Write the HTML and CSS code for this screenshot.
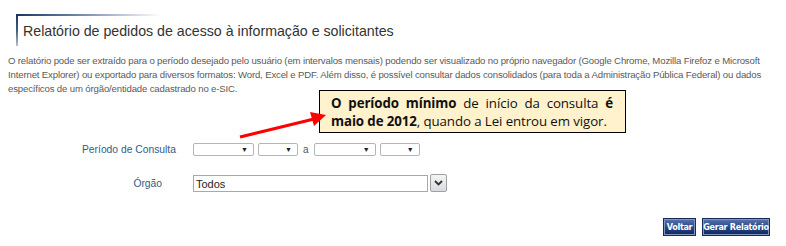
FILE: index.html
```html
<!DOCTYPE html>
<html lang="pt-BR">
<head>
<meta charset="utf-8">
<link rel="stylesheet" href="styles.css">
</head>
<body>
<div class="page">
  <div class="header"><h1 class="title">Relatório de pedidos de acesso à informação e solicitantes</h1></div>
  <p class="intro">O relatório pode ser extraído para o período desejado pelo usuário (em intervalos mensais) podendo ser visualizado no próprio navegador (Google Chrome, Mozilla Firefoz e Microsoft Internet Explorer) ou exportado para diversos formatos: Word, Excel e PDF. Além disso, é possível consultar dados consolidados (para toda a Administração Pública Federal) ou dados específicos de um órgão/entidade cadastrado no e-SIC.</p>
  <div class="form">
    <div class="row row-periodo">
      <span class="label">Período de Consulta</span>
      <div class="controls">
        <span class="sel sel-w1"><span class="tri">▼</span></span>
        <span class="sel sel-w2"><span class="tri">▼</span></span>
        <span class="sep">a</span>
        <span class="sel sel-w3"><span class="tri">▼</span></span>
        <span class="sel sel-w2"><span class="tri">▼</span></span>
      </div>
    </div>
    <div class="row row-orgao">
      <span class="label">Órgão</span>
      <div class="controls">
        <span class="combo">Todos</span>
        <span class="combo-btn"><svg width="9" height="6" viewBox="0 0 9 6"><path d="M1 1 L4.5 4.5 L8 1" fill="none" stroke="#333" stroke-width="1.8"/></svg></span>
      </div>
    </div>
  </div>
  <div class="actions">
    <button class="btn btn-voltar">Voltar</button>
    <button class="btn btn-gerar">Gerar Relatório</button>
  </div>
  <div class="callout">
    <div class="cl-line1"><b>O período mínimo</b> de início da consulta <b>é</b></div>
    <div class="cl-line2"><b>maio de 2012</b>, quando a Lei entrou em vigor.</div>
  </div>
  <svg class="arrow" width="100" height="30" viewBox="0 0 100 30">
    <line x1="2" y1="27" x2="76" y2="9" stroke="#f00" stroke-width="3"/>
    <polygon points="88,5 72,2 76,16" fill="#f00"/>
  </svg>
</div>
</body>
</html>
```
FILE: styles.css
```css
* { box-sizing: border-box; }
html, body { margin: 0; padding: 0; background: #fff; }
body { font-family: "Liberation Sans", Arial, sans-serif; }
.page { position: relative; width: 786px; height: 246px; overflow: hidden; }
.header {
  margin: 14px 0 0 16px;
  height: 32px;
  background:
    linear-gradient(to right, #1c3461 0%, #6b7fa3 40%, rgba(255,255,255,0) 100%) left top / 145px 2px no-repeat,
    linear-gradient(to bottom, #1c3461 0%, #44597f 50%, #b8c0cf 100%) left top / 2px 100% no-repeat;
  padding: 9px 0 0 7px;
}
.title { margin: 0; font-size: 14.2px; font-weight: normal; color: #333; line-height: 17px; }
.intro {
  margin: 8px 4px 0 8px;
  font-size: 9.6px;
  letter-spacing: -0.15px;
  line-height: 14px;
  color: #5a5a5a;
}
.form { margin-top: 47px; }
.row { display: flex; align-items: center; }
.label { width: 162px; text-align: right; font-size: 10.3px; color: #2f5d8c; flex: none; white-space: nowrap; }
.row-periodo .label { text-align: left; padding-left: 82px; }
.controls { display: flex; align-items: center; margin-left: 31px; }
.row-orgao { margin-top: 18px; }
.sel {
  height: 13px;
  border: 1px solid #b5b5b5;
  border-radius: 2px;
  background: #fff;
  display: flex;
  justify-content: flex-end;
  align-items: center;
  margin-right: 4px;
}
.sel-w1 { width: 61px; }
.sel-w2 { width: 40px; }
.sel-w3 { width: 62px; }
.tri { font-size: 7px; color: #222; padding-right: 5px; line-height: 1; }
.sep { font-size: 10px; color: #555; margin: 0 5px 0 1px; }
.combo {
  width: 235px; height: 17px;
  border: 1px solid #a9a9a9;
  font-size: 11px; color: #222;
  padding: 1px 0 0 2px;
  line-height: 14px;
}
.combo-btn {
  width: 17px; height: 18px; margin-left: 2px;
  border: 1px solid #a0a0a0;
  border-radius: 2px;
  background: linear-gradient(#f4f4f4, #d8dbe0);
  display: flex; align-items: center; justify-content: center;
}
.actions { display: flex; justify-content: flex-end; gap: 6px; margin: 26px 16px 0 0; }
.btn {
  height: 18px;
  padding: 0;
  font-family: "DejaVu Sans Condensed", "Liberation Sans", Arial, sans-serif;
  font-stretch: condensed;
  font-weight: bold;
  font-size: 9px;
  letter-spacing: -0.3px;
  color: #fff;
  background: linear-gradient(#5a75ad 0%, #2e4d8d 45%, #0f255a 100%);
  border: 1px solid #16295a;
  box-shadow: inset 0 0 0 1px #8095c2;
  border-radius: 0;
  white-space: nowrap;
  overflow: hidden;
}
.btn-voltar { width: 33px; }
.btn-gerar { width: 68px; }
.callout {
  position: absolute;
  left: 319px; top: 90px;
  width: 307px; height: 43px;
  background: #fff2cc;
  border: 1px solid #000;
  font-family: "Open Sans", sans-serif;
  font-size: 13.3px;
  line-height: 18px;
  color: #111;
  padding: 3px 12px 0 11px;
  letter-spacing: -0.1px;
}
.cl-line1 { text-align: justify; text-align-last: justify; }
.cl-line2 { white-space: nowrap; }
.callout b { font-weight: 700; }
.arrow { position: absolute; left: 238px; top: 110px; }
```
